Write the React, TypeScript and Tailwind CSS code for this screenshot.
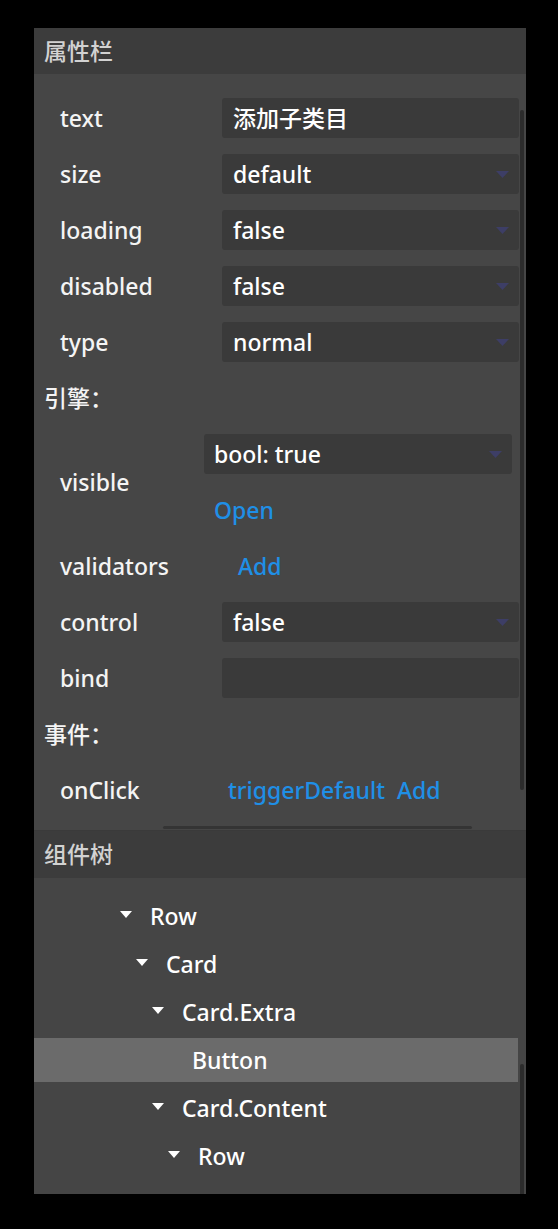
import React from 'react';

type Prop = { label: string; value: string; select?: boolean };

const baseProps: Prop[] = [
  { label: 'text', value: '添加子类目' },
  { label: 'size', value: 'default', select: true },
  { label: 'loading', value: 'false', select: true },
  { label: 'disabled', value: 'false', select: true },
  { label: 'type', value: 'normal', select: true },
];

type Node = { name: string; level: number; leaf?: boolean; active?: boolean };

const tree: Node[] = [
  { name: 'Row', level: 0 },
  { name: 'Card', level: 1 },
  { name: 'Card.Extra', level: 2 },
  { name: 'Button', level: 3, leaf: true, active: true },
  { name: 'Card.Content', level: 2 },
  { name: 'Row', level: 3 },
];

const indent = ['pl-[86px]', 'pl-[102px]', 'pl-[118px]', 'pl-[134px]'];

const Arrow = () => (
  <svg width="13" height="7" viewBox="0 0 13 7" className="shrink-0">
    <polygon points="0,0 13,0 6.5,7" fill="#3d3e66" />
  </svg>
);

const Box = ({ value, select }: { value: string; select?: boolean }) => (
  <div className="flex h-[40px] flex-1 items-center justify-between rounded-[3px] bg-[#3a3a3a] pl-[11px] pr-[10px]">
    <span className="text-white">{value}</span>
    {select && <Arrow />}
  </div>
);

const Row = ({ label, children }: { label: string; children: React.ReactNode }) => (
  <div className="flex h-[56px] items-center pl-[26px] pr-[7px]">
    <span className="w-[162px] shrink-0 text-[#f4f4f4]">{label}</span>
    {children}
  </div>
);

const Section = ({ title }: { title: string }) => (
  <div className="flex h-[56px] items-center pl-[10px] text-[#f4f4f4]">{title}</div>
);

export default function App() {
  return (
    <div className="min-h-[1229px] bg-black pl-[34px] pt-[28px] font-['Noto_Sans','Noto_Sans_CJK_SC',sans-serif] text-[23px] font-medium leading-none">
      <div className="flex w-[492px] flex-col">
        {/* 属性栏 */}
        <div className="flex h-[46px] items-center bg-[#3c3c3c] pl-[10px] text-[#d2d2d2]">属性栏</div>
        <div className="relative h-[756px] overflow-hidden bg-[#464646] pt-[16px]">
          {baseProps.map(p => (
            <Row key={p.label} label={p.label}>
              <Box value={p.value} select={p.select} />
            </Row>
          ))}

          <Section title="引擎：" />

          <div className="flex h-[112px] items-center pl-[26px] pr-[14px]">
            <span className="w-[144px] shrink-0 text-[#f4f4f4]">visible</span>
            <div className="flex flex-1 flex-col">
              <div className="flex h-[40px] items-center justify-between rounded-[3px] bg-[#3a3a3a] pl-[10px] pr-[10px]">
                <span className="text-white">bool: true</span>
                <Arrow />
              </div>
              <div className="mt-[16px] flex h-[40px] items-center pl-[10px] text-[#1f8fe6]">Open</div>
            </div>
          </div>

          <Row label="validators">
            <span className="pl-[16px] text-[#1f8fe6]">Add</span>
          </Row>
          <Row label="control">
            <Box value="false" select />
          </Row>
          <Row label="bind">
            <Box value="" />
          </Row>

          <Section title="事件：" />

          <Row label="onClick">
            <div className="flex gap-[12px] pl-[6px] text-[#1f8fe6]">
              <span>triggerDefault</span>
              <span>Add</span>
            </div>
          </Row>

          {/* scrollbars */}
          <div className="absolute right-[2px] top-[36px] h-[680px] w-[4px] rounded-full bg-[#2c2c2c]" />
          <div className="absolute bottom-[1px] left-[129px] h-[3px] w-[309px] rounded-full bg-[#343434]" />
        </div>

        {/* 组件树 */}
        <div className="flex h-[48px] items-center border-t border-[#3a3a3a] bg-[#3c3c3c] pl-[10px] text-[#d2d2d2]">组件树</div>
        <div className="relative h-[316px] overflow-hidden bg-[#454545] pt-[14px]">
          {tree.map((n, i) => (
            <div key={i} className="h-[48px] py-[2px] pr-[8px]">
              <div className={`flex h-[44px] items-center ${indent[n.level]} ${n.active ? 'bg-[#6b6b6b]' : ''}`}>
                {n.leaf ? (
                  <span className="pl-[24px] text-white">{n.name}</span>
                ) : (
                  <>
                    <svg width="12" height="7" viewBox="0 0 12 7" className="-mt-[4px] shrink-0">
                      <polygon points="0,0 12,0 6,7" fill="#ffffff" />
                    </svg>
                    <span className="pl-[18px] text-white">{n.name}</span>
                  </>
                )}
              </div>
            </div>
          ))}
          <div className="absolute right-[2px] top-[186px] h-[140px] w-[4px] rounded-t-full bg-[#2c2c2c]" />
        </div>
      </div>
    </div>
  );
}
